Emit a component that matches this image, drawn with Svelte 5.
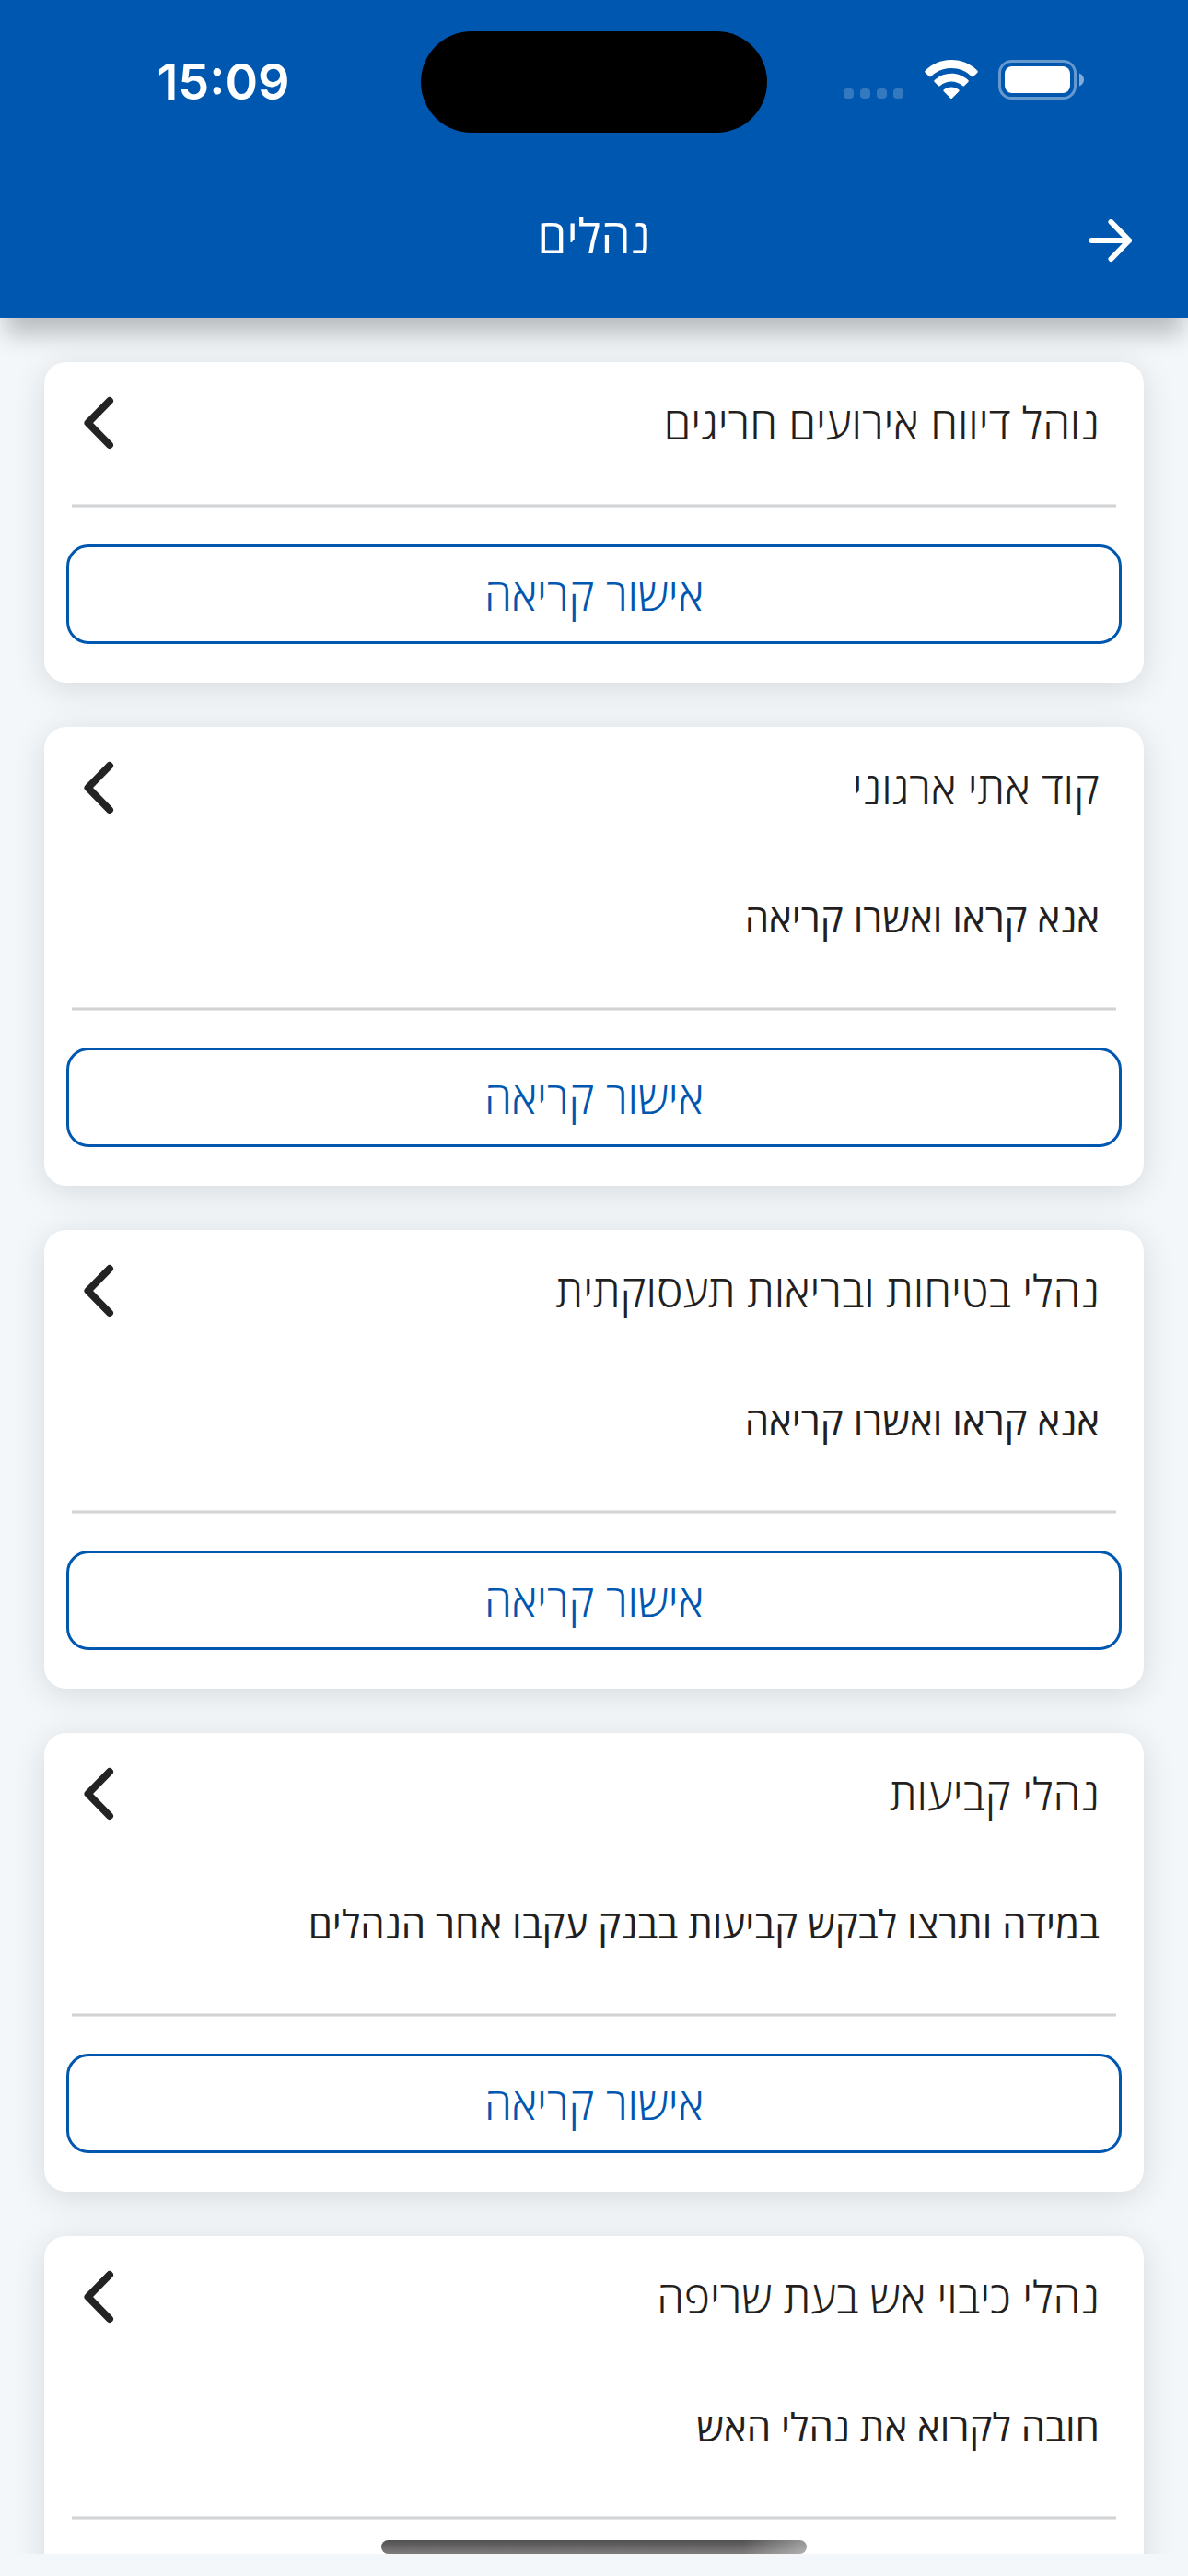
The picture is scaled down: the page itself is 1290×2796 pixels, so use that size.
<script lang="ts">
  type Procedure = { title: string; description?: string };

  const procedures: Procedure[] = [
    { title: 'נוהל דיווח אירועים חריגים' },
    { title: 'קוד אתי ארגוני', description: 'אנא קראו ואשרו קריאה' },
    { title: 'נהלי בטיחות ובריאות תעסוקתית', description: 'אנא קראו ואשרו קריאה' },
    { title: 'נהלי קביעות', description: 'במידה ותרצו לבקש קביעות בבנק עקבו אחר הנהלים' },
    { title: 'נהלי כיבוי אש בעת שריפה', description: 'חובה לקרוא את נהלי האש' }
  ];
</script>

<div class="screen" dir="rtl" lang="he">
  <header>
    <div class="status" dir="ltr">
      <span class="time">15:09</span>
      <span class="island"></span>
      <span class="indicators">
        <svg width="65" height="44" viewBox="0 0 65 44" fill="#fff" opacity=".2">
          <rect x="0" y="31" width="11" height="11" rx="4" />
          <rect x="18" y="31" width="11" height="11" rx="4" />
          <rect x="36" y="31" width="11" height="11" rx="4" />
          <rect x="54" y="31" width="11" height="11" rx="4" />
        </svg>
        <svg class="wifi" width="58" height="44" viewBox="0 0 58 44" fill="#fff">
          <path d="M29 0C18 0 8 4.200.6 11.800Q-.3 12.800.6 13.800L5 18Q6 18.800 7 17.900C13 12.200 20.500 9 29 9S45 12.200 51 17.900Q52 18.800 53 18L57.400 13.800Q58.300 12.800 57.400 11.800C50 4.200 40 0 29 0Z" />
          <path d="M29 14.800C22 14.800 15.600 17.500 10.700 22Q9.700 23 10.700 24L15 28.200Q16 29 17 28.100C20.300 25.200 24.500 23.600 29 23.600S37.700 25.200 41 28.100Q42 29 43 28.200L47.300 24Q48.300 23 47.300 22C42.400 17.500 36 14.800 29 14.800Z" />
          <path d="M29 29.400C25.900 29.400 23 30.500 20.800 32.200Q19.800 33.200 20.800 34.200L28 41.600Q29 42.600 30 41.600L37.200 34.200Q38.200 33.200 37.200 32.200C35 30.500 32.100 29.400 29 29.400Z" />
        </svg>
        <svg width="94" height="44" viewBox="0 0 94 44" fill="#fff">
          <rect x="1.500" y="1.500" width="82" height="40" rx="13" fill="none" stroke="#fff" stroke-width="3" opacity=".4" />
          <rect x="7" y="7" width="71" height="29" rx="8" />
          <path d="M88 14.500C91.500 16 93 18.500 93 21.500S91.500 27 88 28.500Z" opacity=".5" />
        </svg>
      </span>
    </div>
    <div class="bar">
      <button class="back" aria-label="חזרה">
        <svg width="48" height="48" viewBox="0 0 48 48" fill="none" stroke="#fff" stroke-width="6" stroke-linecap="round" stroke-linejoin="round">
          <path d="M3.500 23H44M24.500 3 44 23 24.500 43" />
        </svg>
      </button>
      <h1>נהלים</h1>
    </div>
  </header>

  <main>
    {#each procedures as item}
      <article>
        <a class="head" href="#procedure">
          <h2>{item.title}</h2>
          <svg width="34" height="58" viewBox="0 0 34 58" fill="none" stroke="#232323" stroke-width="8" stroke-linecap="round" stroke-linejoin="round">
            <path d="M29 5 5.500 29 29 53" />
          </svg>
        </a>
        {#if item.description}
          <p>{item.description}</p>
        {/if}
        <hr />
        <button class="confirm">אישור קריאה</button>
      </article>
    {/each}
  </main>
  <span class="home"></span>
</div>

<style>
  :global(body) { margin: 0; background: #f3f7fa; }
  .screen { position: relative; display: flex; flex-direction: column; height: 100vh; box-sizing: border-box; padding-bottom: 24px; background: #f3f7fa; font-family: 'Open Sans', 'Noto Sans', sans-serif; color: #231f20; }
  button { font-family: inherit; cursor: pointer; }
  h1, h2, p, hr { margin: 0; }
  svg { display: block; flex: none; }

  header { position: relative; z-index: 1; flex: none; background: #0057b0; color: #fff; box-shadow: 0 24px 24px -6px rgba(0, 0, 0, 0.23); }
  .status { display: grid; grid-template-columns: 1fr 376px 1fr; align-items: center; height: 178px; }
  .time { justify-self: center; padding-left: 28px; font: 600 54px/60px Inter, sans-serif; }
  .island { height: 110px; border-radius: 55px; background: #000; }
  .indicators { display: flex; justify-self: end; padding: 0 112px 4px 0; }
  .wifi { margin: 0 22px 0 23px; }
  .bar { display: grid; grid-template-columns: 1fr auto 1fr; align-items: center; height: 167px; padding: 0 60px; }
  .back { justify-self: start; padding: 0; border: 0; background: none; }
  h1 { padding-bottom: 14px; font-size: 51px; line-height: 60px; font-weight: 400; }

  main { display: flex; flex-direction: column; flex: 1; min-height: 0; gap: 48px; padding: 48px 48px 0; overflow-y: auto; scrollbar-width: none; }
  article { flex: none; box-sizing: border-box; padding: 0 24px 42px; border-radius: 24px; background: #fff; box-shadow: 0 6px 36px rgba(0, 0, 0, 0.12); }
  .head { display: flex; align-items: center; justify-content: space-between; height: 132px; padding: 0 24px 0 18px; color: inherit; text-decoration: none; }
  h2 { font-size: 48px; line-height: 60px; font-weight: 300; }
  p { height: 150px; box-sizing: border-box; padding: 45px 24px; font-size: 42px; line-height: 60px; }
  hr { height: 2px; margin: 22px 6px 40px; border: 1px solid #e6e7e8; border-width: 1px 0; background: #d1d3d4; }
  .confirm { display: block; width: 100%; height: 108px; padding: 0; border: 3px solid #0057b0; border-radius: 24px; background: #fff; color: #0057b0; font-size: 48px; line-height: 60px; font-weight: 300; }

  .home { position: absolute; bottom: 24px; left: 50%; width: 462px; height: 15px; margin-left: -231px; border-radius: 8px; background: linear-gradient(90deg, transparent 85%, rgba(255, 255, 255, 0.4)), linear-gradient(#505050, #807d7d); }
</style>
